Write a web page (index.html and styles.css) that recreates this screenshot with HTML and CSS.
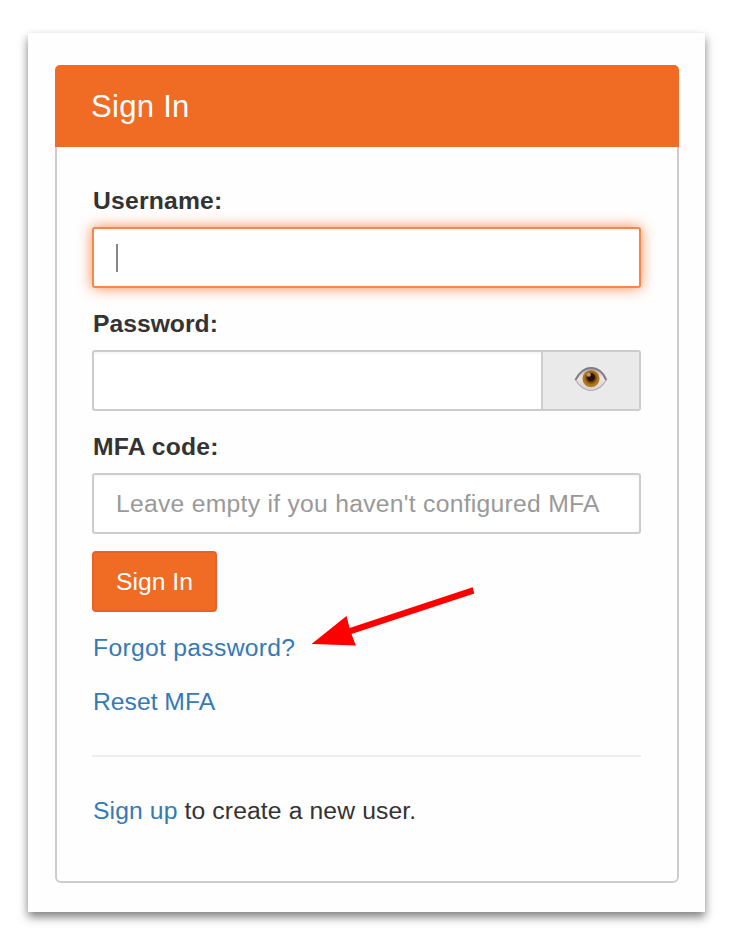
FILE: index.html
```html
<!DOCTYPE html>
<html lang="en">
<head>
<meta charset="utf-8">
<title>Sign In</title>
<link rel="stylesheet" href="styles.css">
</head>
<body>
<main class="sheet">
  <section class="panel">
    <h1 class="panel-heading">Sign In</h1>
    <form class="panel-body">
      <div class="group">
        <label class="label">Username:</label>
        <div class="control focused"><span class="caret"></span></div>
      </div>
      <div class="group">
        <label class="label label-password">Password:</label>
        <div class="control with-addon">
          <span class="addon">
            <svg class="eye" viewBox="0 0 34 28" aria-hidden="true">
              <defs>
                <radialGradient id="iris" cx="50%" cy="46%" r="56%">
                  <stop offset="0" stop-color="#2a0c08"/>
                  <stop offset=".34" stop-color="#4b2510"/>
                  <stop offset=".66" stop-color="#a9700f"/>
                  <stop offset="1" stop-color="#b08c3c"/>
                </radialGradient>
                <linearGradient id="white" x1="0" y1="0" x2="0" y2="1">
                  <stop offset="0" stop-color="#aaa5ac"/>
                  <stop offset=".45" stop-color="#eee5e5"/>
                  <stop offset="1" stop-color="#d9cccd"/>
                </linearGradient>
                <clipPath id="lid"><path d="M1.200 15C5 7 11 2 17 2S29 7 32.500 15C28 22 23 26 17 26S6 22 1.200 15Z"/></clipPath>
              </defs>
              <path d="M1.200 15C5 7 11 2 17 2S29 7 32.500 15C28 22 23 26 17 26S6 22 1.200 15Z" fill="url(#white)"/>
              <g clip-path="url(#lid)">
                <circle cx="17" cy="13.600" r="8.600" fill="url(#iris)"/>
                <circle cx="17" cy="12" r="3.800" fill="#2c0d0b"/>
                <ellipse cx="14.700" cy="9.800" rx="2.200" ry="2" fill="#a89a9a"/>
              </g>
              <path d="M1.400 15C5.500 7 11 3 17 3S29 7 32.300 15" fill="none" stroke="#807c86" stroke-width="2"/>
              <path d="M1.400 15C6 22 11 25.500 17 25.500S28 22 32.300 15" fill="none" stroke="#b5aab0" stroke-width="1.200"/>
            </svg>
          </span>
        </div>
      </div>
      <div class="group">
        <label class="label">MFA code:</label>
        <div class="control"><span class="placeholder">Leave empty if you haven't configured MFA</span></div>
      </div>
      <button class="button" type="button">Sign In</button>
      <a class="link forgot">Forgot password?</a>
      <a class="link">Reset MFA</a>
      <hr class="rule">
      <p class="signup"><a class="link-inline">Sign up</a> to create a new user.</p>
    </form>
  </section>
  <svg class="arrow" viewBox="0 0 166 62" aria-hidden="true">
    <path d="M0.500 55L35.500 27L38.600 39L161.700 -1.700L163.300 4.500L40.500 45L44.800 56.500Z" transform="translate(0 2)" fill="#f00"/>
  </svg>
</main>
</body>
</html>
```
FILE: styles.css
```css
* { box-sizing: border-box; }
body {
  margin: 0;
  padding: 33px 30px 22px 28px;
  background: #fff;
  color: #333;
  font: 24.7px/35px "Liberation Sans", Arial, sans-serif;
}
.sheet {
  position: relative;
  width: 677px;
  height: 879px;
  padding: 32px 26px 29px 27px;
  background: #fefefe;
  box-shadow: 0 5px 9px rgba(0, 0, 0, .5);
}
.panel {
  height: 818px;
  border: 2px solid #ccc;
  border-radius: 6px;
}
.panel-heading {
  margin: -2px -2px 0;
  height: 82px;
  padding: 0 36px;
  border-radius: 5px 5px 0 0;
  background: #f06b23;
  color: #fff;
  font-size: 31px;
  font-weight: 400;
  letter-spacing: .3px;
  line-height: 83px;
}
.panel-body {
  display: flex;
  flex-direction: column;
  align-items: flex-start;
  padding: 36px 36px 0 35px;
}
.group { width: 549px; height: 123px; }
.label {
  display: block;
  height: 44px;
  padding-left: 1px;
  font-weight: 700;
  letter-spacing: .2px;
  line-height: 35px;
}
.label-password { letter-spacing: 0; }
.control {
  display: flex;
  align-items: center;
  height: 61px;
  padding: 0 22px;
  border: 2px solid #ccc;
  border-radius: 3px;
  background: #fff;
  box-shadow: inset 0 2px 2px rgba(0, 0, 0, .04);
}
.focused {
  border-color: #f5864c;
  box-shadow: inset 0 2px 2px rgba(0, 0, 0, .04), 0 0 14px rgba(245, 115, 45, .85);
}
.caret { width: 2px; height: 28px; background: #888; }
.with-addon { padding: 0; justify-content: flex-end; }
.addon {
  display: flex;
  align-items: center;
  justify-content: center;
  width: 98px;
  height: 100%;
  padding-bottom: 4px;
  border-left: 2px solid #ccc;
  background: #eaeaea;
}
.eye { width: 34px; height: 28px; }
.placeholder { color: #999; letter-spacing: .27px; white-space: nowrap; }
.button {
  width: 125px;
  height: 61px;
  margin-top: -1px;
  padding: 0;
  border: 2px solid #e9602a;
  border-radius: 4px;
  background: #f06b23;
  color: #fff;
  font: inherit;
}
.link, .link-inline { color: #337ab7; }
.link { display: block; height: 35px; margin-bottom: 18px; padding-left: 1px; white-space: nowrap; }
.forgot { margin: 18px 0 19px; letter-spacing: .3px; }
.rule { width: 549px; height: 2px; margin: 18px 0 36px; border: 0; background: #eee; }
.signup { margin: 0; padding-left: 1px; letter-spacing: .12px; white-space: nowrap; }
.arrow { position: absolute; left: 283px; top: 554px; width: 166px; height: 62px; }
```
